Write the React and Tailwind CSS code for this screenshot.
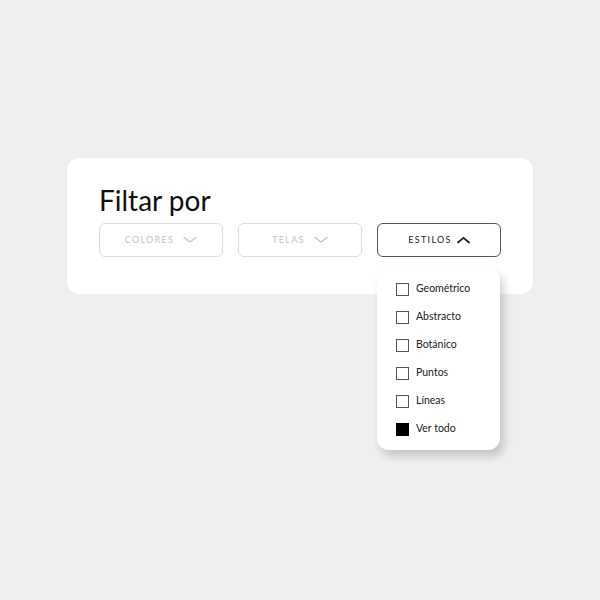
import React from "react";

const ChevronDown = ({ className }) => (
  <svg className={className} width="14" height="8" viewBox="0 0 14 8" fill="none">
    <path d="M1 1.5L7 6L13 1.5" stroke="currentColor" strokeWidth="1.3" strokeLinecap="round" />
  </svg>
);

const ChevronUp = ({ className }) => (
  <svg className={className} width="13" height="8" viewBox="0 0 13 8" fill="none">
    <path d="M1 6.5L6.5 1.8L12 6.5" stroke="currentColor" strokeWidth="1.7" strokeLinecap="round" />
  </svg>
);

const estilos = [
  { label: "Geométrico", checked: false },
  { label: "Abstracto", checked: false },
  { label: "Botánico", checked: false },
  { label: "Puntos", checked: false },
  { label: "Líneas", checked: false },
  { label: "Ver todo", checked: true },
];

export default function App() {
  return (
    <div
      className="w-[600px] h-[600px] bg-[#efefef] pt-[158px] pl-[67px]"
      style={{ fontFamily: "Lato, 'Noto Sans', sans-serif" }}
    >
      <div className="relative w-[466px] h-[136px] bg-white rounded-[12px] pt-[24px] px-[32px]">
        <h1 className="text-[28px] leading-[36px] text-[#111] font-normal">Filtar por</h1>
        <div className="flex gap-[15px] mt-[5px]">
          <button className="w-[124px] h-[34px] rounded-[6px] border border-[#dcdcdc] flex items-center justify-center gap-[9px] text-[#c4c4c4]">
            <span className="text-[9px] tracking-[1.3px]">COLORES</span>
            <ChevronDown />
          </button>
          <button className="w-[124px] h-[34px] rounded-[6px] border border-[#dcdcdc] flex items-center justify-center gap-[9px] text-[#c4c4c4]">
            <span className="text-[9px] tracking-[1.3px]">TELAS</span>
            <ChevronDown />
          </button>
          <div className="relative">
            <button className="w-[124px] h-[34px] rounded-[6px] border border-[#555] flex items-center justify-center gap-[5px] text-[#222]">
              <span className="text-[9px] tracking-[1.3px]">ESTILOS</span>
              <ChevronUp />
            </button>
            <div className="absolute left-0 top-[45px] w-[123px] bg-white rounded-[12px] shadow-[4px_6px_10px_rgba(0,0,0,0.18)] pt-[15px] pb-[15px] px-[19px] flex flex-col gap-[16px] z-10">
              {estilos.map((e) => (
                <div key={e.label} className="flex items-center gap-[7px] h-[12px]">
                  <span
                    className={
                      e.checked
                        ? "w-[13px] h-[13px] bg-black shrink-0"
                        : "w-[13px] h-[13px] border border-[#555] shrink-0"
                    }
                  />
                  <span className="text-[10.5px] text-[#222] whitespace-nowrap">{e.label}</span>
                </div>
              ))}
            </div>
          </div>
        </div>
      </div>
    </div>
  );
}
